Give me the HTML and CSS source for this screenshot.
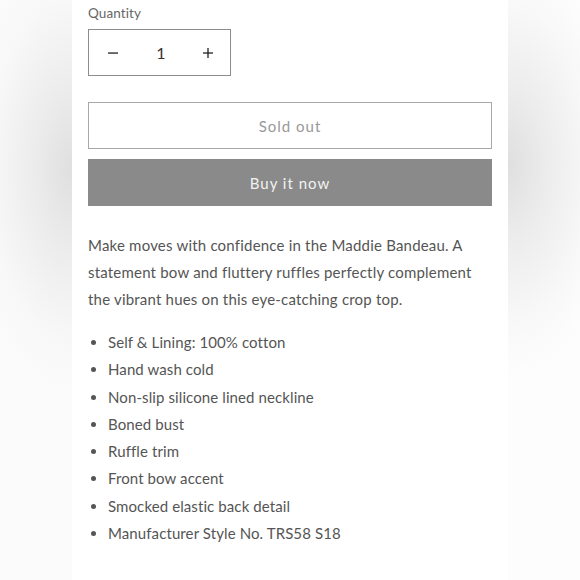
FILE: index.html
```html
<!DOCTYPE html>
<html lang="en">
<head>
<meta charset="utf-8">
<title>Maddie Bandeau</title>
<link rel="stylesheet" href="styles.css">
</head>
<body>
<div class="page">
  <aside class="side side-left"></aside>
  <main class="panel">
    <label class="qty-label" for="qty">Quantity</label>
    <div class="qty">
      <button class="qty-btn qty-minus" type="button" aria-label="Decrease quantity">
        <svg width="10" height="2" viewBox="0 0 10 2"><rect x="0" y="0.4" width="10" height="1.3" fill="#222"/></svg>
      </button>
      <input class="qty-input" id="qty" type="text" value="1">
      <button class="qty-btn qty-plus" type="button" aria-label="Increase quantity">
        <svg width="10" height="10" viewBox="0 0 10 10"><rect x="0" y="4.35" width="10" height="1.3" fill="#222"/><rect x="4.35" y="0" width="1.3" height="10" fill="#222"/></svg>
      </button>
    </div>
    <div class="buttons">
      <button class="btn btn-outline" type="button" disabled>Sold out</button>
      <button class="btn btn-solid" type="button">Buy it now</button>
    </div>
    <p class="desc">Make moves with confidence in the Maddie Bandeau. A statement bow and fluttery ruffles perfectly complement the vibrant hues on this eye-catching crop top.</p>
    <ul class="features">
      <li>Self &amp; Lining: 100% cotton</li>
      <li>Hand wash cold</li>
      <li>Non-slip silicone lined neckline</li>
      <li>Boned bust</li>
      <li>Ruffle trim</li>
      <li>Front bow accent</li>
      <li>Smocked elastic back detail</li>
      <li>Manufacturer Style No. TRS58 S18</li>
    </ul>
  </main>
  <aside class="side side-right"></aside>
</div>
</body>
</html>
```
FILE: styles.css
```css
* { box-sizing: border-box; }
html, body { margin: 0; padding: 0; }
body {
  width: 580px;
  height: 580px;
  overflow: hidden;
  background: #fdfdfd;
  font-family: "Lato", "Noto Sans", sans-serif;
  color: #555;
}
.page {
  display: flex;
  height: 580px;
}
.side {
  width: 72px;
  flex: 0 0 72px;
}
.side-left {
  background:
    radial-gradient(ellipse 110px 230px at 100% 170px, #dfdfdf 0%, #ececec 35%, #f8f8f8 75%, #fbfbfb 100%),
    #fbfbfb;
}
.side-right {
  background:
    radial-gradient(ellipse 110px 210px at 0% 165px, #dfdfdf 0%, #ececec 35%, #f8f8f8 75%, rgba(253,253,253,0) 100%),
    #fdfdfd;
}
.panel {
  width: 436px;
  flex: 0 0 436px;
  background: #fff;
  padding: 4px 16px 0;
}
.qty-label {
  display: block;
  font-size: 13.5px;
  line-height: 18px;
  letter-spacing: 0.1px;
  color: #666;
}
.qty {
  display: flex;
  align-items: center;
  width: 143px;
  height: 47px;
  margin-top: 7px;
  border: 1px solid #8c8c8c;
}
.qty-btn {
  height: 100%;
  border: 0;
  padding: 0;
  background: transparent;
  display: flex;
  align-items: center;
  justify-content: center;
}
.qty-minus { flex: 0 0 47px; }
.qty-plus { flex: 0 0 44px; }
.qty-input {
  flex: 1;
  min-width: 0;
  width: 47px;
  border: 0;
  padding: 0;
  text-align: center;
  font: inherit;
  font-size: 16px;
  color: #333;
  background: transparent;
}
.buttons {
  display: flex;
  flex-direction: column;
  gap: 10px;
  margin-top: 26px;
}
.btn {
  height: 47px;
  width: 100%;
  font-family: inherit;
  font-size: 15px;
  letter-spacing: 1px;
  padding: 0;
}
.btn-outline {
  background: #fff;
  border: 1px solid #a8a8a8;
  color: #999;
}
.btn-solid {
  background: #8a8a8a;
  border: 0;
  color: #f2f2f2;
}
.desc {
  margin: 26px 0 0;
  font-size: 15px;
  line-height: 27px;
  letter-spacing: 0.2px;
}
.features {
  margin: 16px 0 0;
  padding-left: 20px;
  font-size: 15px;
  line-height: 27.3px;
  letter-spacing: 0.1px;
}
```
